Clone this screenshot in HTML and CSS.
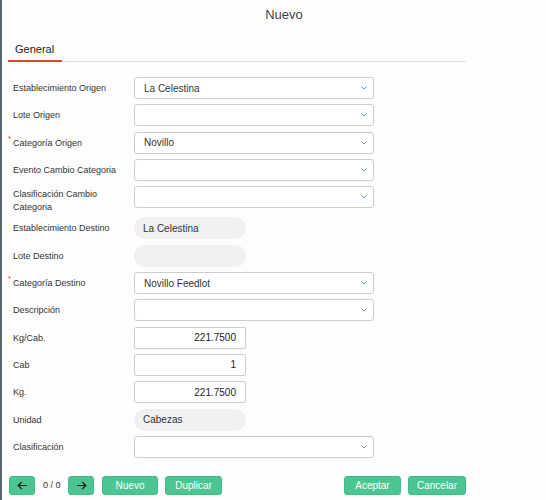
FILE: index.html
```html
<!DOCTYPE html>
<html lang="es">
<head>
<meta charset="utf-8">
<title>Nuevo</title>
<link rel="stylesheet" href="styles.css">
</head>
<body>
<div class="page">
  <div class="title">Nuevo</div>
  <div class="dialog">
    <div class="tabs"><div class="tab active">General</div></div>
    <div class="form">
      <div class="label">Establecimiento Origen</div>
      <div class="select"><span>La Celestina</span><svg class="chev" width="6" height="4" viewBox="0 0 6 4"><path d="M0.5 0.5L3 3L5.5 0.5"/></svg></div>

      <div class="label">Lote Origen</div>
      <div class="select"><span></span><svg class="chev" width="6" height="4" viewBox="0 0 6 4"><path d="M0.5 0.5L3 3L5.5 0.5"/></svg></div>

      <div class="label req">Categoría Origen</div>
      <div class="select"><span>Novillo</span><svg class="chev" width="6" height="4" viewBox="0 0 6 4"><path d="M0.5 0.5L3 3L5.5 0.5"/></svg></div>

      <div class="label">Evento Cambio Categoria</div>
      <div class="select"><span></span><svg class="chev" width="6" height="4" viewBox="0 0 6 4"><path d="M0.5 0.5L3 3L5.5 0.5"/></svg></div>

      <div class="label two">Clasificación Cambio Categoria</div>
      <div class="select"><span></span><svg class="chev" width="6" height="4" viewBox="0 0 6 4"><path d="M0.5 0.5L3 3L5.5 0.5"/></svg></div>

      <div class="label">Establecimiento Destino</div>
      <div class="readonly">La Celestina</div>

      <div class="label">Lote Destino</div>
      <div class="readonly"></div>

      <div class="label req">Categoría Destino</div>
      <div class="select"><span>Novillo Feedlot</span><svg class="chev" width="6" height="4" viewBox="0 0 6 4"><path d="M0.5 0.5L3 3L5.5 0.5"/></svg></div>

      <div class="label">Descripción</div>
      <div class="select"><span></span><svg class="chev" width="6" height="4" viewBox="0 0 6 4"><path d="M0.5 0.5L3 3L5.5 0.5"/></svg></div>

      <div class="label">Kg/Cab.</div>
      <div class="number">221.7500</div>

      <div class="label">Cab</div>
      <div class="number">1</div>

      <div class="label">Kg.</div>
      <div class="number">221.7500</div>

      <div class="label">Unidad</div>
      <div class="readonly">Cabezas</div>

      <div class="label">Clasificación</div>
      <div class="select"><span></span><svg class="chev" width="6" height="4" viewBox="0 0 6 4"><path d="M0.5 0.5L3 3L5.5 0.5"/></svg></div>
    </div>

    <div class="footer">
      <div class="group">
        <button class="btn arrow"><svg width="11" height="9" viewBox="0 0 11 9"><path d="M10 4.5H1.2M4.8 1L1.2 4.5L4.8 8"/></svg></button>
        <span class="count">0 / 0</span>
        <button class="btn arrow"><svg width="11" height="9" viewBox="0 0 11 9"><path d="M1 4.5H9.8M6.2 1L9.8 4.5L6.2 8"/></svg></button>
        <button class="btn">Nuevo</button>
        <button class="btn wide">Duplicar</button>
      </div>
      <div class="group right">
        <button class="btn wide">Aceptar</button>
        <button class="btn">Cancelar</button>
      </div>
    </div>
  </div>
</div>
</body>
</html>
```

FILE: styles.css
```css
html, body {
  margin: 0;
  padding: 0;
}
body {
  background: #fdfdfd;
  font-family: "Liberation Sans", Arial, sans-serif;
  color: #333;
}
.page {
  border-left: 2px solid #5c6470;
  min-height: 500px;
  box-sizing: border-box;
}
.title {
  height: 30px;
  line-height: 30px;
  text-align: center;
  font-size: 13px;
  color: #444;
  padding-left: 20px;
}
.dialog {
  width: 458px;
  margin-left: 6px;
}
.tabs {
  margin-top: 8px;
  border-bottom: 1px solid #dddddd;
  display: flex;
}
.tab {
  height: 22px;
  line-height: 22px;
  padding: 0 8px 0 7px;
  font-size: 11px;
  color: #222;
  margin-bottom: -1px;
}
.tab.active {
  border-bottom: 2px solid #e2452f;
}
.form {
  margin-top: 15px;
  padding-left: 5px;
  display: grid;
  grid-template-columns: 121px 240px;
  row-gap: 5.3px;
  align-items: start;
}
.label {
  font-size: 9px;
  color: #333;
  height: 22px;
  display: flex;
  align-items: center;
  position: relative;
}
.label.two {
  height: 26px;
  line-height: 13px;
  align-items: flex-start;
  padding-top: 2px;
  box-sizing: border-box;
}
.label.req::before {
  content: "*";
  position: absolute;
  left: -5px;
  top: 2px;
  color: #e23b2e;
  font-size: 8px;
}
.select {
  height: 22px;
  box-sizing: border-box;
  border: 1px solid #cdcdcd;
  border-radius: 3px;
  background: #fff;
  display: flex;
  align-items: center;
  justify-content: space-between;
  padding: 0 6px 0 9px;
  font-size: 10px;
  color: #333;
}
.chev {
  fill: none;
  stroke: #5b9ddf;
  stroke-width: 1;
}
.readonly {
  width: 112px;
  height: 22px;
  box-sizing: border-box;
  border-radius: 11px;
  background: #eef0f2;
  padding: 0 9px;
  display: flex;
  align-items: center;
  font-size: 10px;
  color: #333;
}
.number {
  width: 112px;
  height: 22px;
  box-sizing: border-box;
  border: 1px solid #cdcdcd;
  border-radius: 2px;
  background: #fff;
  padding: 0 9px;
  display: flex;
  align-items: center;
  justify-content: flex-end;
  font-size: 10px;
  color: #222;
}
.footer {
  margin-top: 18px;
  display: flex;
  justify-content: space-between;
  align-items: center;
}
.group {
  display: flex;
  align-items: center;
  gap: 8px;
  padding-left: 1px;
}
.group.right {
  gap: 7px;
  padding-left: 0;
  padding-right: 0;
}
.btn {
  height: 19px;
  min-width: 56px;
  padding: 0 8px;
  box-sizing: border-box;
  border: 1px solid #42bb88;
  border-radius: 3px;
  background: #4bc592;
  color: #fff;
  font-family: "Liberation Sans", Arial, sans-serif;
  font-size: 10px;
  display: flex;
  align-items: center;
  justify-content: center;
  margin: 0;
  flex-shrink: 0;
  white-space: nowrap;
}
.btn.wide {
  min-width: 57px;
}
.group .btn.wide:last-child {
  margin-left: -1px;
}
.btn.arrow {
  min-width: 26px;
  width: 26px;
  padding: 0;
}
.btn.arrow svg {
  fill: none;
  stroke: #1e1e1e;
  stroke-width: 1.2;
}
.count {
  font-size: 9px;
  color: #333;
  width: 17px;
  text-align: center;
  white-space: nowrap;
  flex-shrink: 0;
}
```
